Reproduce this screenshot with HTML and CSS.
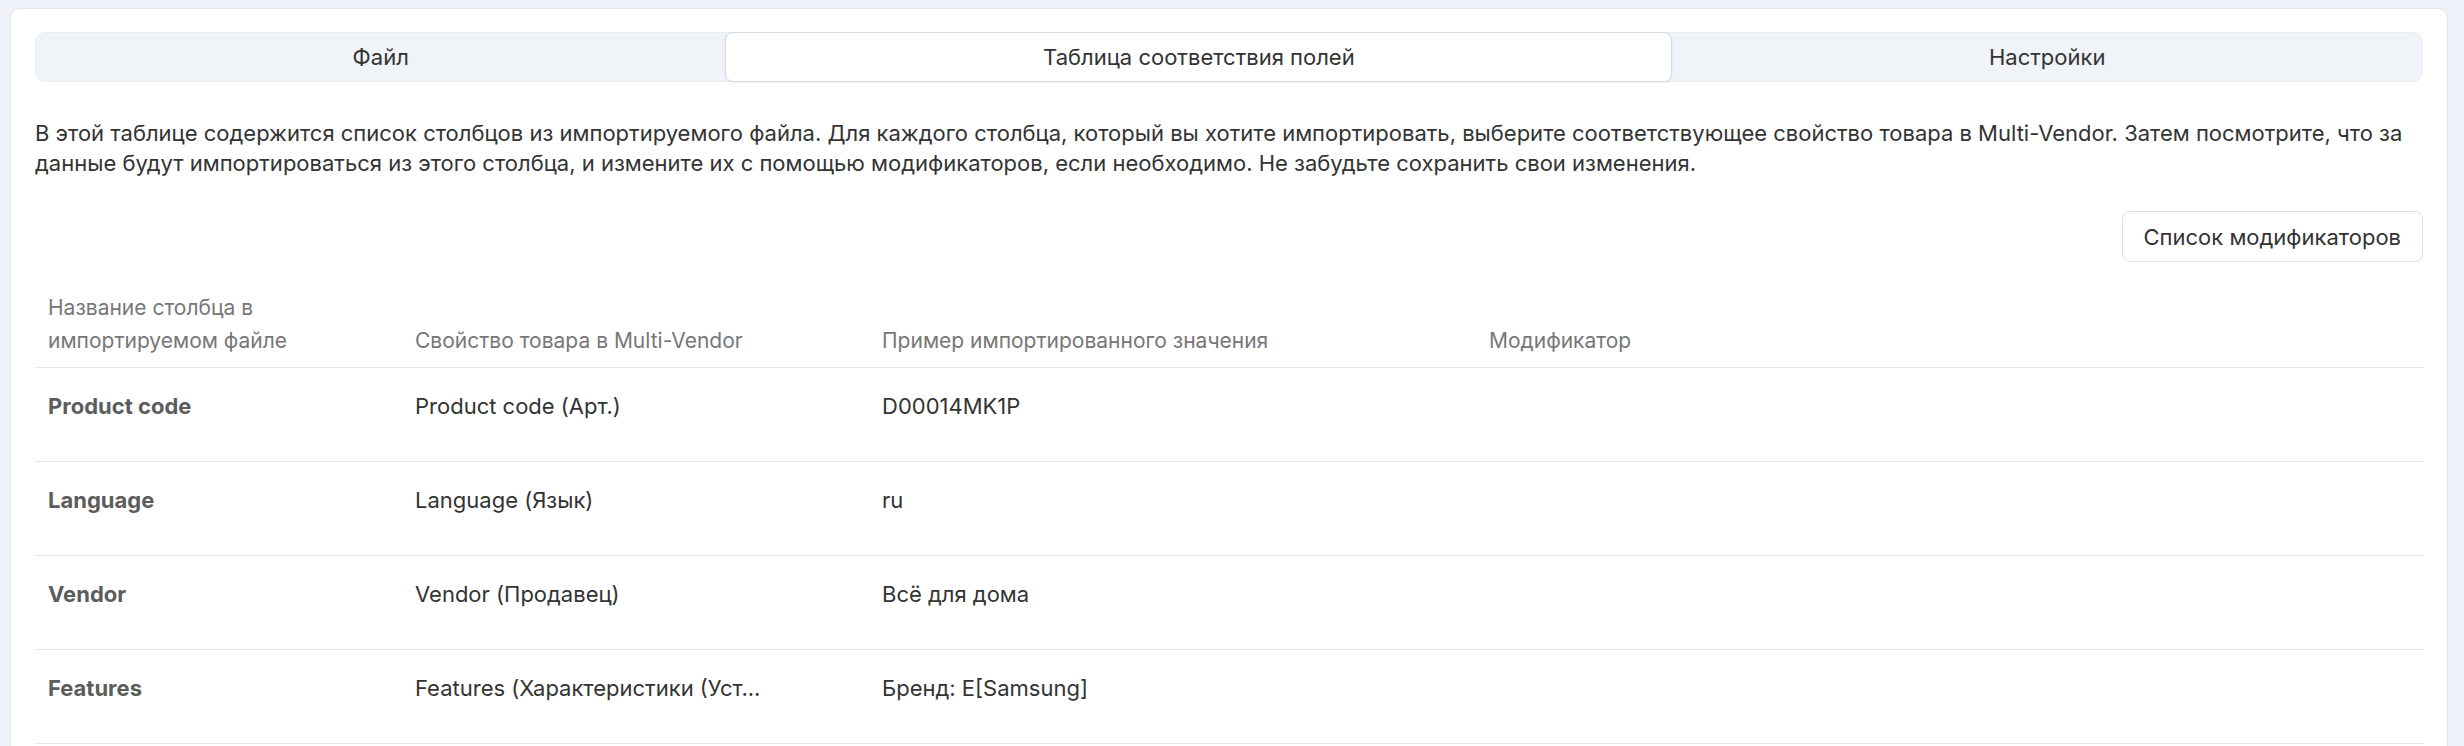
FILE: index.html
```html
<!DOCTYPE html>
<html lang="ru">
<head>
  <meta charset="UTF-8">
  <meta name="viewport" content="width=device-width, initial-scale=1.0">
  <title>Импорт товаров — таблица соответствия полей</title>
  <link rel="stylesheet" href="styles.css">
</head>
<body>
  <div class="card">
    <div class="tabs">
      <div class="tab">Файл</div>
      <div class="tab active">Таблица соответствия полей</div>
      <div class="tab">Настройки</div>
    </div>

    <p class="intro">В этой таблице содержится список столбцов из импортируемого файла. Для каждого столбца, который вы хотите импортировать, выберите соответствующее свойство товара в Multi-Vendor. Затем посмотрите, что за данные будут импортироваться из этого столбца, и измените их с помощью модификаторов, если необходимо. Не забудьте сохранить свои изменения.</p>

    <div class="toolbar">
      <button class="btn">Список модификаторов</button>
    </div>

    <div class="fields">
      <div class="fields-row fields-head">
        <div class="cell">Название столбца в импортируемом файле</div>
        <div class="cell">Свойство товара в Multi-Vendor</div>
        <div class="cell">Пример импортированного значения</div>
        <div class="cell">Модификатор</div>
      </div>

      <div class="fields-row">
        <div class="cell name">Product code</div>
        <div class="cell">Product code (Арт.)</div>
        <div class="cell">D00014MK1P</div>
        <div class="cell"></div>
      </div>

      <div class="fields-row">
        <div class="cell name">Language</div>
        <div class="cell">Language (Язык)</div>
        <div class="cell">ru</div>
        <div class="cell"></div>
      </div>

      <div class="fields-row">
        <div class="cell name">Vendor</div>
        <div class="cell">Vendor (Продавец)</div>
        <div class="cell">Всё для дома</div>
        <div class="cell"></div>
      </div>

      <div class="fields-row">
        <div class="cell name">Features</div>
        <div class="cell">Features (Характеристики (Уст...</div>
        <div class="cell">Бренд: E[Samsung]</div>
        <div class="cell"></div>
      </div>
    </div>
  </div>
</body>
</html>
```

FILE: styles.css
```css
/* общие цвета */
:root {
  --page-bg: #eef2f8;
  --card-bg: #fff;
  --card-border: #dfe5ef;
  --tabs-bg: #f0f3f8;
  --text-color: #333;
  --muted-color: #777;
  --label-color: #5c5c5c;
  --line-color: #e2e7ef;
}

body {
  margin: 0;
  background-color: var(--page-bg);
  color: var(--text-color);
  font-family: 'Inter', 'Noto Sans', sans-serif;
  font-size: 22px;
  line-height: 30px;
  overflow: hidden;
}

.card {
  margin: 8px 16px 0 10px;
  padding: 23px 24px 0;
  min-height: 760px;
  background: var(--card-bg);
  border: 1px solid var(--card-border);
  border-radius: 10px;
}

/* вкладки */
.tabs {
  display: flex;
  height: 50px;
  background-color: var(--tabs-bg);
  border: 1px solid #e8edf4;
  border-radius: 10px;
  box-sizing: border-box;
}

.tab {
  flex: 1 1 auto;
  display: flex;
  align-items: center;
  justify-content: center;
  color: #333;
  white-space: nowrap;
  cursor: pointer;
}

.tab.active {
  margin: -1px 0;
  background-color: #fff;
  border: 1px solid #d5dce8;
  border-radius: 8px;
  box-shadow: 0 1px 2px rgba(30, 50, 90, 0.08);
}

.intro {
  margin: 36px 0 0;
}

.toolbar {
  display: flex;
  justify-content: flex-end;
  margin-top: 33px;
}

.btn {
  height: 51px;
  padding: 0 21px;
  background-color: #fff;
  border: 1px solid #d9e0ea;
  border-radius: 8px;
  font-family: inherit;
  font-size: 22px;
  color: #333;
  cursor: pointer;
}

/* таблица полей */
.fields {
  margin-top: 29px;
}

.fields-row {
  display: grid;
  grid-template-columns: 367px 467px 607px 1fr;
  border-bottom: 1px solid var(--line-color);
  height: 94px;
  box-sizing: border-box;
}

.fields-row .cell {
  padding: 23px 13px 0;
  white-space: nowrap;
}

.fields-head {
  height: auto;
  align-items: end;
}

.fields-head .cell {
  padding: 0 13px 10px;
  color: var(--muted-color);
  font-size: 21px;
  line-height: 33px;
  white-space: normal;
}

.cell.name {
  font-weight: 700;
  color: var(--label-color);
}
```
